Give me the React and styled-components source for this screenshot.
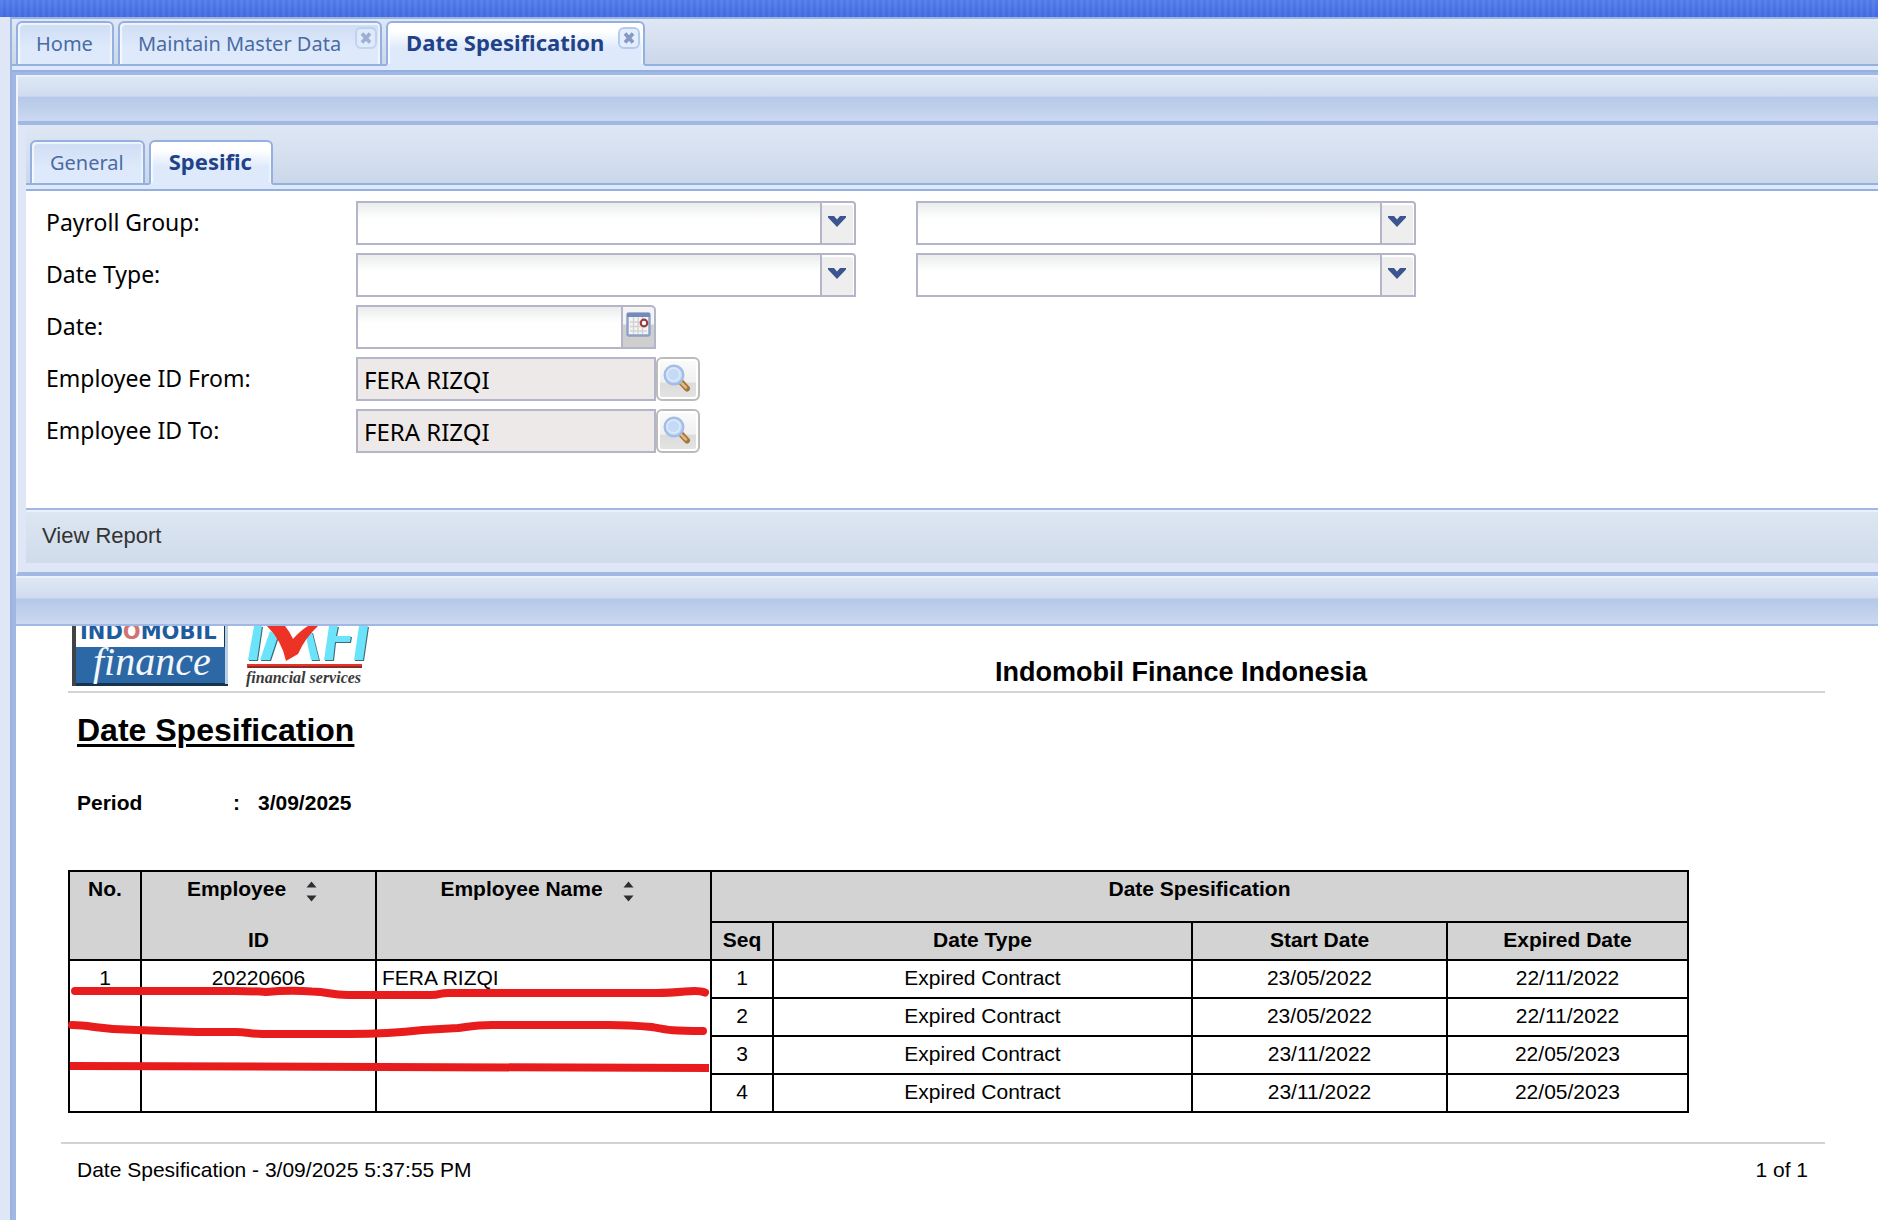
import { useState } from "react";
import styled, { createGlobalStyle } from "styled-components";

const tahoma = `"Noto Sans", Tahoma, sans-serif`;
const arial = `"Liberation Sans", Arial, sans-serif`;

// data of the report
const contracts = [
  { seq: 1, type: "Expired Contract", start: "23/05/2022", end: "22/11/2022" },
  { seq: 2, type: "Expired Contract", start: "23/05/2022", end: "22/11/2022" },
  { seq: 3, type: "Expired Contract", start: "23/11/2022", end: "22/05/2023" },
  { seq: 4, type: "Expired Contract", start: "23/11/2022", end: "22/05/2023" },
];
const columnWidths = [72, 235, 335, 62, 419, 255, 241];

const GlobalStyle = createGlobalStyle`
  * {
    box-sizing: border-box;
  }
  body {
    margin: 0;
    background-color: #dfe8f6;
    overflow-x: hidden;
  }
  button, input, select {
    font: inherit;
    margin: 0;
  }
`;

//-Page
const Page = styled.div`
  min-height: 100vh;
  display: flex;
  flex-direction: column;
  background-color: #dfe6f5;
  font-family: ${tahoma};
`;
const TopBar = styled.header`
  height: 17px;
  background: repeating-linear-gradient(
      90deg,
      rgba(255, 255, 255, 0.06) 0 3px,
      transparent 3px 6px
    ),
    linear-gradient(#527be8, #4169e1);
`;
const Frame = styled.main`
  flex: 1;
  margin-left: 10px;
  border-left: 2px solid #99b4e2;
  border-top: 2px solid #99b4e2;
  display: flex;
  flex-direction: column;
`;

//-Tabs
const TabStrip = styled.nav`
  display: flex;
  align-items: flex-end;
  gap: 4px;
  height: ${(props) => (props.$inner ? "60px" : "47px")};
  padding-left: 4px;
  background: linear-gradient(#dfe7f4, #cbd8ea);
  border-bottom: 2px solid #94b0e0;
`;
const TabSpacer = styled.div`
  height: 6px;
  background-color: #deeafb;
  border-bottom: 2px solid #94b0e0;
`;
const Tab = styled.div`
  position: relative;
  display: flex;
  height: 45px;
  margin-bottom: -2px;
  border: 2px solid #94b0e0;
  border-bottom: ${(props) =>
    props.$active ? "2px solid #deeafb" : "2px solid #94b0e0"};
  border-radius: 6px 6px 0 0;
  background: ${(props) =>
    props.$active
      ? "linear-gradient(#ffffff 20%, #deeafb 60%)"
      : "linear-gradient(#cedcf4, #deeafb 60%)"};
  box-shadow: inset 2px 2px 1px rgba(255, 255, 255, 0.7),
    inset -2px 0 1px rgba(255, 255, 255, 0.5);
`;
const TabButton = styled.button`
  padding: 0 ${(props) => (props.$closable ? "39px" : "19px")}
    ${(props) => (props.$active ? "4px" : "0")} 18px;
  border: none;
  background-color: transparent;
  color: ${(props) => (props.$active ? "#1f4289" : "#4a6ba4")};
  font-size: ${(props) => (props.$active ? "22px" : "20px")};
  font-weight: ${(props) => (props.$active ? 700 : 400)};
  line-height: 36px;
  white-space: nowrap;
  cursor: pointer;
`;
const CloseButton = styled.button`
  position: absolute;
  top: 4px;
  right: 3px;
  width: 22px;
  height: 22px;
  padding: 0;
  border: 2px solid #b5cbee;
  border-radius: 6px;
  background-color: #e3edfb;
  opacity: ${(props) => (props.$active ? 1 : 0.7)};
  svg {
    display: block;
    margin: auto;
  }
`;

//-Panels
const Panels = styled.div`
  flex: 1;
  display: flex;
  flex-direction: column;
  border-left: 4px solid #a0b8e3;
  border-top: 3px solid #a0b8e3;
`;
const PanelHeader = styled.div`
  height: 50px;
  border-top: 2px solid #eaf1fb;
  border-bottom: ${(props) => (props.$thick ? "4px" : "2px")} solid #a0b8e3;
  background: linear-gradient(#dde7f5, #d0dcee 44%, #b5c8e8 45%, #cbd9f0);
`;
const Criteria = styled.section`
  border-left: 2px solid #f2f6fc;
  border-bottom: 4px solid #a0b8e3;
`;
const CriteriaBody = styled.div`
  padding-left: 8px;
  padding-bottom: 9px;
  background-color: #dfe6f5;
`;
const Form = styled.form`
  display: flex;
  flex-direction: column;
  gap: 8px;
  padding: 10px 20px 55px;
  background-color: #fff;
`;
const Row = styled.div`
  display: grid;
  grid-template-columns: 310px 500px 500px;
  height: 44px;
`;
const Label = styled.label`
  color: #000;
  font-size: 23px;
  line-height: 42px;
`;
const Fields = styled.div`
  display: flex;
`;
const Combo = styled.div`
  position: relative;
  display: flex;
  margin-left: ${(props) => (props.$second ? "60px" : "0")};
  width: 500px;
`;
const Select = styled.select`
  width: 100%;
  border: 2px solid #b4b5c8;
  border-radius: 0 4px 0 0;
  appearance: none;
  background: linear-gradient(#eaedec, #fff 40%);
  padding: 0 44px 0 6px;
  font-size: 24px;
`;
const Trigger = styled.span`
  position: absolute;
  top: 2px;
  bottom: 2px;
  right: 2px;
  width: 34px;
  border-left: 2px solid #b4b5c8;
  border-radius: 0 3px 0 0;
  background-color: #eeeeee;
  box-shadow: inset -1px 2px 1px #fff;
  pointer-events: none;
  svg {
    display: block;
    margin: 13px auto 0 6px;
  }
`;
const TextInput = styled.input`
  width: ${(props) => (props.$short ? "265px" : "300px")};
  padding: 0 6px;
  border: 2px solid #b4b5c8;
  border-right-width: ${(props) => (props.$short ? "0" : "2px")};
  border-radius: 0;
  background: ${(props) =>
    props.readOnly ? "#ece9e8" : "linear-gradient(#eaedec, #fff 40%)"};
  color: #000;
  font-size: 24px;
  outline: none;
`;
const DateButton = styled.button`
  width: 35px;
  padding: 0;
  border: 2px solid #b4b5c8;
  border-radius: 0 5px 0 0;
  background: linear-gradient(#f4f4f4 42%, #cfcfcf 46%);
  svg {
    display: block;
    margin: -6px auto 0 3px;
  }
`;
const SearchButton = styled.button`
  width: 44px;
  padding: 0;
  border: 2px solid #bbbbbb;
  border-radius: 6px;
  background: linear-gradient(#fbfbfb, #f0f0f0 58%, #dcdcdc 60%, #e4e4e4);
  box-shadow: inset 0 0 0 2px #fff;
  svg {
    display: block;
    margin: -2px auto 0 5px;
  }
`;
const Toolbar = styled.div`
  height: 55px;
  padding-left: 12px;
  border-top: 2px solid #a0b8e3;
  box-shadow: inset 0 2px 0 #eaf1fa;
  background: linear-gradient(#dde6f3, #d0dcea);
`;
const ToolbarButton = styled.button`
  padding: 0 4px;
  border: none;
  background-color: transparent;
  color: #333;
  font-family: ${arial};
  font-size: 22px;
  line-height: 52px;
  cursor: pointer;
`;

//-Report
const Report = styled.section`
  flex: 1;
  padding: 0 53px 20px 45px;
  background-color: #fff;
  color: #000;
  font-family: ${arial};
`;
const ReportHead = styled.div`
  display: grid;
  grid-template-columns: 1fr auto 1fr;
  height: 67px;
  margin-left: 7px;
  border-bottom: 2px solid #d3d3d3;
`;
const Logos = styled.svg`
  display: block;
  width: 310px;
  height: 65px;
  margin-left: 4px;
`;
const Company = styled.div`
  margin-left: 469px;
  font-size: 27px;
  font-weight: 700;
  line-height: 92px;
  white-space: nowrap;
`;
const Title = styled.h1`
  margin: 0 0 0 16px;
  padding-top: 18px;
  font-size: 32px;
  line-height: 38px;
  text-decoration: underline;
  text-decoration-thickness: 3px;
  text-underline-offset: 3px;
`;
const Period = styled.div`
  display: grid;
  grid-template-columns: 156px 25px auto;
  margin: 41px 0 54px 16px;
  font-size: 21px;
  font-weight: 700;
  line-height: 26px;
`;
const TableWrap = styled.div`
  position: relative;
  width: 1620px;
  margin-left: 7px;
`;
const Table = styled.table`
  width: 100%;
  table-layout: fixed;
  border-collapse: collapse;
  font-size: 21px;
  line-height: 26px;
`;
const Th = styled.th`
  height: ${(props) => (props.$low ? "38px" : "51px")};
  padding: 4px 0 0;
  border: 2px solid #000;
  background-color: #d3d3d3;
  vertical-align: top;
`;
const Td = styled.td`
  height: 38px;
  padding: 4px 5px 0;
  border: 2px solid #000;
  text-align: ${(props) => (props.$left ? "left" : "center")};
  vertical-align: top;
`;
const HeadLine = styled.div`
  display: flex;
  justify-content: center;
  gap: 20px;
  padding-right: 12px;
  height: 51px;
`;
const SortButton = styled.button`
  width: 12px;
  height: 26px;
  padding: 4px 0 0;
  border: none;
  background-color: transparent;
  svg {
    display: block;
  }
`;
const Marker = styled.svg`
  position: absolute;
  top: 0;
  left: 0;
  width: 660px;
  height: 242px;
  overflow: visible;
  pointer-events: none;
`;
const ReportFoot = styled.footer`
  display: flex;
  justify-content: space-between;
  margin-top: 29px;
  padding: 13px 17px 0 16px;
  border-top: 2px solid #d3d3d3;
  font-size: 21px;
  line-height: 26px;
`;

//--Icons
const CloseIcon = () => (
  <svg width="12" height="12" viewBox="0 0 12 12">
    <path d="M2 1.5 10 10.5M10 1.5 2 10.5" stroke="#8499c6" strokeWidth="3.6" />
  </svg>
);

const ArrowIcon = () => (
  <svg width="18" height="11" viewBox="0 0 18 11">
    <path d="M0 0H6L9 3.6 12 0H18V1.5L9 11 0 1.5Z" fill="#3c5590" />
  </svg>
);

const CalendarIcon = () => (
  <svg width="25" height="25" viewBox="0 0 25 25">
    <rect x="1" y="1" width="23" height="23" rx="2" fill="#f4f4f4" />
    <path
      d="M4 10H21M4 14.5H21M4 19H21M7.500 5V22M12 5V22M16.500 5V22"
      stroke="#d2d2d2"
      strokeWidth="1.300"
    />
    <rect x="1.500" y="1.500" width="22" height="22" rx="1.500" fill="none" stroke="#8ba1c8" strokeWidth="2.400" />
    <path d="M1 1H24V5H1Z" fill="#718cbc" />
    <circle cx="18" cy="11" r="3.300" fill="#fff" stroke="#9b3a3a" strokeWidth="2.200" />
  </svg>
);

const SearchIcon = () => (
  <svg width="28" height="28" viewBox="0 0 28 28">
    <path d="M18.500 18.500 24 24.500" stroke="#a87435" strokeWidth="6" strokeLinecap="round" />
    <path d="M18 18.500 23 23.500" stroke="#dcb98a" strokeWidth="2.500" strokeLinecap="round" />
    <circle cx="11" cy="11" r="9.300" fill="#c5dbf5" stroke="#a3bde4" strokeWidth="2.400" />
    <circle cx="10.500" cy="10.500" r="6.500" fill="none" stroke="#dbe9fb" strokeWidth="1.500" />
  </svg>
);

const SortIcon = () => (
  <svg width="11" height="21" viewBox="0 0 11 21">
    <path d="M5.500 0.500 10.500 6.500H0.500ZM0.500 14.500H10.500L5.500 20.500Z" fill="#2c2e34" />
  </svg>
);

// both logos run up under the panel header
const CompanyLogos = () => (
  <Logos viewBox="0 0 310 65" role="img" aria-label="Indomobil finance, IMFI financial services">
    <rect x="0" y="0" width="156" height="60" fill="#15344f" />
    <rect x="0" y="0" width="4" height="60" fill="#3f4448" />
    <rect x="4" y="0" width="148" height="21" fill="#fff" />
    <rect x="4" y="21" width="149" height="36" fill="#2c68a5" />
    <rect x="153" y="0" width="3" height="58" fill="#b9cfe4" />
    <text x="8" y="13" fontFamily={`"DejaVu Sans", Verdana, sans-serif`} fontSize="21" fontWeight="700" fill="#1f5c9e">
      IND
      <tspan fill="#cf7474">O</tspan>
      MOBIL
    </text>
    <text x="21" y="49" fontFamily={`"Liberation Serif", "Times New Roman", serif`} fontSize="40" fontStyle="italic" fill="#f3f7fb">
      finance
    </text>
    <g fill="#3b6a74" transform="translate(1 1)">
      <path d="M182 0H190L185 34H176ZM198 5 206 10 198 34H188ZM233 6H240L247 34H239ZM257 0H266L264 10H279L278 16H263L261 34H252ZM287 0H296L291 34H282Z" />
    </g>
    <path
      d="M182 0H190L185 34H176ZM198 5 206 10 198 34H188ZM233 6H240L247 34H239ZM257 0H266L264 10H279L278 16H263L261 34H252ZM287 0H296L291 34H282Z"
      fill="#6be4fb"
    />
    <path d="M195 0H213Q218 6 221 13Q229 4 236 0H246Q233 12 226 28L214 35Q210 15 195 0Z" fill="#ec3326" />
    <rect x="175" y="38" width="115" height="4" fill="#e5352c" />
    <rect x="176" y="40" width="114" height="2" fill="#8f2a26" />
    <text
      x="174"
      y="57"
      fontFamily={`"Liberation Serif", "Times New Roman", serif`}
      fontSize="16"
      fontStyle="italic"
      fontWeight="700"
      fill="#3a3a3a"
    >
      financial services
    </text>
  </Logos>
);

function ComboBox({ id, label, second }) {
  return (
    <Combo $second={second}>
      <Select id={id} aria-label={label} defaultValue="">
        <option value=""></option>
      </Select>
      <Trigger>
        <ArrowIcon />
      </Trigger>
    </Combo>
  );
}

function LookupField({ id, label }) {
  return (
    <Row>
      <Label htmlFor={id}>{label}</Label>
      <Fields>
        <TextInput id={id} value="FERA RIZQI" readOnly />
        <SearchButton type="button" aria-label="Search">
          <SearchIcon />
        </SearchButton>
      </Fields>
    </Row>
  );
}

function TabItem({ title, active, closable, onSelect }) {
  return (
    <Tab $active={active}>
      <TabButton type="button" $active={active} $closable={closable} onClick={onSelect}>
        {title}
      </TabButton>
      {closable && (
        <CloseButton type="button" aria-label="Close" $active={active}>
          <CloseIcon />
        </CloseButton>
      )}
    </Tab>
  );
}

function ReportTable() {
  return (
    <TableWrap>
      <Table>
        <colgroup>
          {columnWidths.map((width, index) => (
            <col key={index} style={{ width }} />
          ))}
        </colgroup>
        <thead>
          <tr>
            <Th rowSpan={2}>No.</Th>
            <Th rowSpan={2}>
              <HeadLine>
                Employee
                <SortButton type="button" aria-label="Sort by ID">
                  <SortIcon />
                </SortButton>
              </HeadLine>
              ID
            </Th>
            <Th rowSpan={2}>
              <HeadLine>
                Employee Name
                <SortButton type="button" aria-label="Sort by name">
                  <SortIcon />
                </SortButton>
              </HeadLine>
            </Th>
            <Th colSpan={4}>Date Spesification</Th>
          </tr>
          <tr>
            <Th $low>Seq</Th>
            <Th $low>Date Type</Th>
            <Th $low>Start Date</Th>
            <Th $low>Expired Date</Th>
          </tr>
        </thead>
        <tbody>
          {contracts.map((item, index) => (
            <tr key={item.seq}>
              {index === 0 && (
                <>
                  <Td rowSpan={4}>1</Td>
                  <Td rowSpan={4}>20220606</Td>
                  <Td rowSpan={4} $left>
                    FERA RIZQI
                  </Td>
                </>
              )}
              <Td>{item.seq}</Td>
              <Td>{item.type}</Td>
              <Td>{item.start}</Td>
              <Td>{item.end}</Td>
            </tr>
          ))}
        </tbody>
      </Table>
      {/* red pen lines over the employee columns */}
      <Marker viewBox="0 0 660 242" fill="none" stroke="#e81c1c" strokeWidth="8">
        <path
          d="M7 121H167Q183 121 198 122Q221 120 244 121.500C262 122 261 125 280 125H363C373 125 371 123 380 123H588Q601 123 617 121.500Q631 120 637 122.500"
          strokeLinecap="round"
          strokeLinejoin="round"
        />
        <path
          d="M4 155C24 155 32 160 69 160Q94 161 129 162H168C178 162 184 164 194 164H281Q320 164 355 160L390 158C405 156 410 155 424 155H541C560 155 572 156 584 157C600 160 604 161 635 161"
          strokeLinecap="round"
          strokeLinejoin="round"
        />
        <path d="M2 196 641 198" />
      </Marker>
    </TableWrap>
  );
}

function App() {
  const [mainTab, setMainTab] = useState("Date Spesification");
  const [subTab, setSubTab] = useState("Spesific");
  return (
    <Page>
      <GlobalStyle />
      <TopBar />
      <Frame>
        <TabStrip>
          {["Home", "Maintain Master Data", "Date Spesification"].map((title) => (
            <TabItem
              key={title}
              title={title}
              active={mainTab === title}
              closable={title !== "Home"}
              onSelect={() => setMainTab(title)}
            />
          ))}
        </TabStrip>
        <TabSpacer />
        <Panels>
          <Criteria>
            <PanelHeader $thick />
            <CriteriaBody>
              <TabStrip $inner>
                {["General", "Spesific"].map((title) => (
                  <TabItem
                    key={title}
                    title={title}
                    active={subTab === title}
                    onSelect={() => setSubTab(title)}
                  />
                ))}
              </TabStrip>
              <TabSpacer />
              <Form>
                <Row>
                  <Label htmlFor="payroll">Payroll Group:</Label>
                  <ComboBox id="payroll" />
                  <ComboBox label="Payroll Group to" second />
                </Row>
                <Row>
                  <Label htmlFor="datetype">Date Type:</Label>
                  <ComboBox id="datetype" />
                  <ComboBox label="Date Type to" second />
                </Row>
                <Row>
                  <Label htmlFor="date">Date:</Label>
                  <Fields>
                    <TextInput id="date" type="text" $short />
                    <DateButton type="button" aria-label="Pick date">
                      <CalendarIcon />
                    </DateButton>
                  </Fields>
                </Row>
                <LookupField id="empfrom" label="Employee ID From:" />
                <LookupField id="empto" label="Employee ID To:" />
              </Form>
              <Toolbar>
                <ToolbarButton type="button">View Report</ToolbarButton>
              </Toolbar>
            </CriteriaBody>
          </Criteria>
          <PanelHeader />
          <Report>
            <ReportHead>
              <CompanyLogos />
              <Company>Indomobil Finance Indonesia</Company>
            </ReportHead>
            <Title>Date Spesification</Title>
            <Period>
              <span>Period</span>
              <span>:</span>
              <span>3/09/2025</span>
            </Period>
            <ReportTable />
            <ReportFoot>
              <span>Date Spesification - 3/09/2025 5:37:55 PM</span>
              <span>1 of 1</span>
            </ReportFoot>
          </Report>
        </Panels>
      </Frame>
    </Page>
  );
}

export default App;
